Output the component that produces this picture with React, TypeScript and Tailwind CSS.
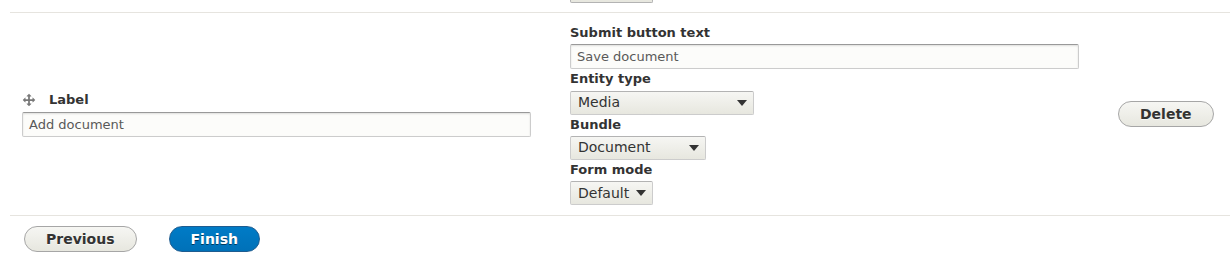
import type { ReactNode } from 'react';

const font = { fontFamily: '"DejaVu Sans", Verdana, sans-serif' };

function MoveIcon() {
  return (
    <svg width="14" height="14" viewBox="0 0 16 16" className="shrink-0">
      <path
        fill="#787878"
        d="M14.904 7.753l-2.373-2.372c-.291-.292-.529-.193-.529.22v1.399h-3v-3h1.398c.414 0 .512-.239.221-.53l-2.371-2.372c-.137-.136-.36-.136-.497 0l-2.372 2.372c-.292.292-.193.53.22.53h1.399v3h-3v-1.369c0-.413-.239-.511-.53-.22l-2.372 2.372c-.136.136-.136.359 0 .494l2.372 2.372c.291.292.53.192.53-.219v-1.43h3v3h-1.4c-.413 0-.511.238-.22.529l2.374 2.373c.137.137.36.137.495 0l2.373-2.373c.29-.291.19-.529-.222-.529h-1.398v-3h3v1.4c0 .412.238.511.529.219l2.373-2.371c.137-.137.137-.359 0-.495z"
      />
    </svg>
  );
}

function FieldLabel({ children }: { children: ReactNode }) {
  return <div className="text-[13px] font-bold leading-[18.25px] pt-[1px] mb-[2px] text-[#333]">{children}</div>;
}

function TextInput({ value }: { value: string }) {
  return (
    <div className="w-[509px] h-[25px] flex items-center px-[6px] border border-[#ccc] border-t-[#999] rounded-[2px] bg-[#fcfcfa] shadow-[inset_0_1px_2px_rgba(0,0,0,0.12)] text-[13px] text-[#595959]">
      {value}
    </div>
  );
}

function Select({ value, width }: { value: string; width: string }) {
  return (
    <div
      className={`${width} h-[24px] flex items-center justify-between pl-[7px] pr-[6px] border border-[#ccc] border-t-[#b3b3b3] rounded-[2px] bg-gradient-to-b from-[#f6f6f3] to-[#e7e7df] text-[14px] text-[#333]`}
    >
      <span>{value}</span>
      <svg width="10" height="6" viewBox="0 0 10 6">
        <path d="M0 0h10L5 6z" fill="#333" />
      </svg>
    </div>
  );
}

function Button({ children, primary }: { children: ReactNode; primary?: boolean }) {
  return (
    <button
      className={
        primary
          ? 'h-[26px] px-[21px] rounded-full border border-[#1e5c90] bg-gradient-to-b from-[#007bc6] to-[#0071b8] text-white text-[14px] font-bold [text-shadow:0_1px_rgba(0,0,0,0.5)]'
          : 'h-[26px] px-[21px] rounded-full border border-[#a6a6a6] bg-gradient-to-b from-[#f6f6f3] to-[#e7e7df] text-[#333] text-[14px] font-bold [text-shadow:0_1px_rgba(255,255,255,0.6)]'
      }
    >
      {children}
    </button>
  );
}

export default function App() {
  return (
    <div className="w-[1232px] h-[270px] bg-white overflow-hidden" style={font}>
      <div className="ml-[10px] w-[1220px]">
        {/* bottom of the previous row */}
        <div className="h-[13px] border-b border-[#e6e4df]">
          <div className="ml-[560px] w-[83px] h-[3px] border border-t-0 border-[#b3b3b3] rounded-b-[2px] bg-[#e7e7df]" />
        </div>

        <div className="flex items-center border-b border-[#e6e4df]">
          <div className="w-[548px] px-[12px] py-[10px]">
            <div className="flex items-center mb-[3px] leading-[18px]">
              <MoveIcon />
              <span className="ml-[13px] text-[13px] font-bold text-[#333]">Label</span>
            </div>
            <TextInput value="Add document" />
          </div>

          <div className="w-[548px] px-[12px] py-[10px]">
            <FieldLabel>Submit button text</FieldLabel>
            <TextInput value="Save document" />
            <FieldLabel>Entity type</FieldLabel>
            <Select value="Media" width="w-[184px]" />
            <FieldLabel>Bundle</FieldLabel>
            <Select value="Document" width="w-[136px]" />
            <FieldLabel>Form mode</FieldLabel>
            <Select value="Default" width="w-[83px]" />
          </div>

          <div className="px-[12px] py-[10px]">
            <Button>Delete</Button>
          </div>
        </div>

        <div className="flex gap-[32px] pl-[14px] pt-[10px]">
          <Button>Previous</Button>
          <Button primary>Finish</Button>
        </div>
      </div>
    </div>
  );
}
